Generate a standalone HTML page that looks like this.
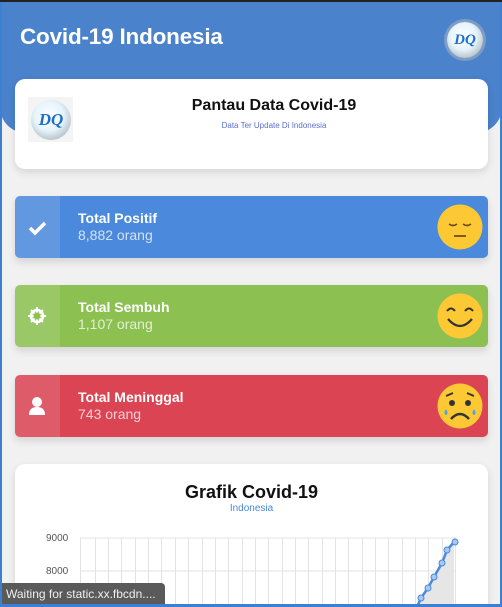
<!DOCTYPE html>
<html><head><meta charset="utf-8"><style>
*{box-sizing:border-box;margin:0;padding:0}
html{width:502px;height:607px;overflow:hidden}
body{width:502px;height:607px;overflow:hidden;background:#f1f1f1;font-family:"Liberation Sans",sans-serif;position:relative}
.frame{position:absolute;left:0;top:0;width:502px;height:607px;border-left:2px solid #3d7fd0;border-right:2px solid #3d7fd0;border-bottom:3px solid #3d7fd0;pointer-events:none;z-index:20}
.topbar{position:absolute;left:0;top:0;width:502px;height:2px;background:#222;z-index:21}
.hdr{position:absolute;left:0;top:2px;width:502px;height:131px;background:#4a82cc;border-radius:0 0 26px 26px}
.title{position:absolute;left:20px;top:24px;color:#fff;font-weight:bold;font-size:22.5px;letter-spacing:-0.2px}
.logo{position:absolute;border-radius:50%;background:radial-gradient(circle at 45% 40%,#fff 0,#e6f4fb 45%,#b9c4cc 75%,#8c99a3 100%);color:#1c6fc9;font-family:"Liberation Serif",serif;font-style:italic;font-weight:bold;text-align:center}
.card{position:absolute;left:15px;width:473px;background:#fff;border-radius:10px;box-shadow:0 3px 8px rgba(0,0,0,.12);overflow:hidden}
.stat{position:absolute;left:15px;width:473px;height:62px;border-radius:5px;color:#fff;box-shadow:0 4px 8px rgba(0,0,0,.12);overflow:hidden}
.stat .ic{position:absolute;left:0;top:0;width:45px;height:100%;background:rgba(255,255,255,.13)}
.stat b{position:absolute;left:63px;top:14px;font-size:14px}
.stat span{position:absolute;left:63px;top:31px;font-size:14px;opacity:.75}
.stat svg.e{position:absolute;right:5px;top:8px}
</style></head><body>
<div class="topbar"></div>
<div class="hdr"></div>
<div class="title">Covid-19 Indonesia</div>
<div class="logo" style="left:447px;top:22px;width:36px;height:36px;font-size:15px;line-height:36px;box-shadow:0 0 0 3px rgba(160,175,190,.6)">DQ</div>
<div class="card" style="top:79px;height:90px">
  <div style="position:absolute;left:13px;top:18px;width:45px;height:45px;background:#f4f4f4"></div>
  <div class="logo" style="left:16px;top:21px;width:40px;height:40px;font-size:17px;line-height:40px">DQ</div>
  <div style="position:absolute;left:0;width:473px;padding-left:45px;text-align:center;top:18px;font-weight:bold;font-size:16px;color:#111">Pantau Data Covid-19</div>
  <div style="position:absolute;left:0;width:473px;padding-left:45px;text-align:center;top:42px;font-size:8px;color:#5b6fd0">Data Ter Update Di Indonesia</div>
</div>

<div class="stat" style="top:196px;background:#4a89dc">
  <div class="ic"><svg width="45" height="62"><path d="M15 32l5 5 10-10" stroke="#fff" stroke-width="3.5" fill="none"/></svg></div>
  <b>Total Positif</b><span>8,882 orang</span>
  <svg class="e" width="46" height="46"><circle cx="23" cy="23" r="22.5" fill="#fcc934"/><path d="M12 20q4 3 8 0M26 20q4 3 8 0" stroke="#6b4a1e" stroke-width="1.6" fill="none"/><path d="M17 32h12" stroke="#6b4a1e" stroke-width="1.8"/></svg>
</div>
<div class="stat" style="top:285px;background:#8cc051">
  <div class="ic"><svg width="45" height="62"><circle cx="22" cy="31" r="6" fill="none" stroke="#fff" stroke-width="2.5"/><path d="M22 22v18M13 31h18M16 25l12 12M28 25l-12 12" stroke="#fff" stroke-width="2"/><circle cx="22" cy="31" r="3.5" fill="#8cc051"/></svg></div>
  <b>Total Sembuh</b><span>1,107 orang</span>
  <svg class="e" width="46" height="46"><circle cx="23" cy="23" r="22.5" fill="#fcc934"/><path d="M10 18q4-5 8 0M28 18q4-5 8 0" stroke="#333" stroke-width="2" fill="none"/><path d="M11 26q12 14 24 0" stroke="#333" stroke-width="2.2" fill="none"/></svg>
</div>
<div class="stat" style="top:375px;background:#da4453">
  <div class="ic"><svg width="45" height="62"><circle cx="22" cy="27" r="5" fill="#fff"/><path d="M14 40q0-8 8-8t8 8z" fill="#fff"/></svg></div>
  <b>Total Meninggal</b><span>743 orang</span>
  <svg class="e" width="46" height="46"><circle cx="23" cy="23" r="22.5" fill="#fcc934"/><circle cx="15" cy="20" r="3" fill="#333"/><circle cx="31" cy="20" r="3" fill="#333"/><path d="M9 13l7-3M37 13l-7-3" stroke="#333" stroke-width="1.8"/><path d="M14 36q9-10 18 0" stroke="#333" stroke-width="2.5" fill="none"/><path d="M9 26q-3 5 0 6q3-1 0-6M37 26q-3 5 0 6q3-1 0-6" fill="#4aa3e8"/></svg>
</div>

<div class="card" style="top:464px;height:143px;border-radius:10px 10px 0 0">
  <div style="position:absolute;left:0;width:473px;text-align:center;top:18px;font-weight:bold;font-size:18px;color:#111">Grafik Covid-19</div>
  <div style="position:absolute;left:0;width:473px;text-align:center;top:39px;font-size:10px;color:#4a89dc">Indonesia</div>
</div>
<svg style="position:absolute;left:0;top:0" width="502" height="607">
  <g font-size="10" fill="#555" font-family="Liberation Sans"><text x="46" y="541">9000</text><text x="46" y="574">8000</text></g>
  <g stroke="#e3e3e3" stroke-width="1">
    <path d="M80 538H456M80 571H456"/>
    <path d="M80.5 538V607M95.5 538V607M108.5 538V607M121.5 538V607M135.5 538V607M148.5 538V607M161.5 538V607M175.5 538V607M188.5 538V607M202.5 538V607M215.5 538V607M228.5 538V607M242.5 538V607M255.5 538V607M268.5 538V607M282.5 538V607M295.5 538V607M308.5 538V607M322.5 538V607M335.5 538V607M348.5 538V607M362.5 538V607M375.5 538V607M388.5 538V607M402.5 538V607M415.5 538V607M428.5 538V607M442.5 538V607M455.5 538V607"/>
  </g>
  <path d="M418 607L421 598L428 588L434 577L442 563L447 550L454 542V607Z" fill="#e6e6e6"/>
  <path d="M417 607L421 598L428 588L434 577L442 563L447 550L454 542" stroke="#4a89dc" stroke-width="2.5" fill="none"/>
  <g fill="#a9c8ef" stroke="#4a89dc" stroke-width="1"><circle cx="421" cy="598" r="3"/><circle cx="428" cy="588" r="3"/><circle cx="434" cy="577" r="3"/><circle cx="442" cy="563" r="3"/><circle cx="447" cy="550" r="3"/><circle cx="455" cy="542" r="3"/></g>
</svg>
<div style="position:absolute;left:0;top:583px;width:165px;height:24px;background:#5a5a5a;border-radius:0 4px 0 0;color:#f0f0f0;font-size:12px;line-height:22px;padding-left:6px;z-index:10">Waiting for static.xx.fbcdn....</div>
<div class="frame"></div>
</body></html>
